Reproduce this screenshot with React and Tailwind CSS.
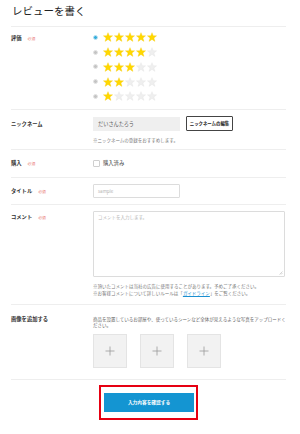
import React from "react";

const JP = "font-['Noto_Sans_CJK_JP','Noto_Sans',sans-serif]";

function Star({ on }) {
  return (
    <svg width="10" height="10" viewBox="0 0 24 24" className="block">
      <polygon
        points="12,1.5 15,9 23,9.2 16.7,14.2 19,22.5 12,17.8 5,22.5 7.3,14.2 1,9.2 9,9"
        fill={on ? "#ffd800" : "#efefef"}
        stroke={on ? "#f5c800" : "#e2e2e2"}
        strokeWidth="0.8"
      />
    </svg>
  );
}

function Required() {
  return <span className="ml-[6px] text-[3.8px] font-normal text-[#e8706b]">必須</span>;
}

function Label({ children, req, className = "" }) {
  return (
    <div className={`w-[82px] shrink-0 text-[5.3px] font-bold leading-[8px] text-[#333] ${className}`}>
      {children}
      {req && <Required />}
    </div>
  );
}

function Plus() {
  return (
    <svg width="10" height="10" viewBox="0 0 10 10">
      <line x1="5" y1="0.5" x2="5" y2="9.5" stroke="#9a9a9a" strokeWidth="0.8" />
      <line x1="0.5" y1="5" x2="9.5" y2="5" stroke="#9a9a9a" strokeWidth="0.8" />
    </svg>
  );
}

export default function App() {
  const ratings = [5, 4, 3, 2, 1];

  return (
    <div className={`w-[300px] h-[434px] bg-white ${JP}`}>
      <h1 className="h-[26px] pl-[12px] pt-[4px] text-[10.5px] leading-[14px] font-normal text-[#222]">
        レビューを書く
      </h1>

      <div className="mx-[11px] w-[275px]">
        {/* 評価 */}
        <div className="flex h-[83px] border-t border-[#eeeeee]">
          <Label req className="pt-[7px]">評価</Label>
          <div className="pt-[3px]">
            {ratings.map((r) => (
              <div key={r} className="flex h-[14.75px] items-center">
                {r === 5 ? (
                  <span className="h-[5px] w-[5px] rounded-full border border-[#bfe2f1] bg-[#35aedd]" />
                ) : (
                  <span className="h-[5px] w-[5px] rounded-full border border-[#e4e4e4] bg-[#c4c4c4]" />
                )}
                <div className="ml-[5px] flex gap-[1px]">
                  {[1, 2, 3, 4, 5].map((i) => (
                    <Star key={i} on={i <= r} />
                  ))}
                </div>
              </div>
            ))}
          </div>
        </div>

        {/* ニックネーム */}
        <div className="flex h-[40px] border-t border-[#eeeeee]">
          <Label className="pt-[10px]">ニックネーム</Label>
          <div className="pt-[6px]">
            <div className="flex items-center">
              <div className="flex h-[14px] w-[87px] items-center bg-[#efefef] pl-[5px] text-[5.2px] text-[#555]">
                だいさんたろう
              </div>
              <div className="ml-[6px] flex h-[15px] w-[47px] items-center justify-center rounded-[1px] border border-[#444] bg-white text-[4.4px] font-bold text-[#222]">
                ニックネームの編集
              </div>
            </div>
            <div className="mt-[6px] text-[4.5px] leading-[6px] text-[#777]">
              ※ニックネームの登録をおすすめします。
            </div>
          </div>
        </div>

        {/* 購入 */}
        <div className="flex h-[28px] items-center border-t border-[#eeeeee]">
          <Label req>購入</Label>
          <div className="flex items-center">
            <span className="h-[7px] w-[7px] rounded-[1px] border border-[#cfcfcf] bg-white" />
            <span className="ml-[3px] text-[5.3px] text-[#444]">購入済み</span>
          </div>
        </div>

        {/* タイトル */}
        <div className="flex h-[27px] items-center border-t border-[#eeeeee]">
          <Label req>タイトル</Label>
          <div className="flex h-[14px] w-[87px] items-center rounded-[1px] border border-[#dcdcdc] pl-[4px] text-[4.5px] text-[#b5b5b5]">
            sample
          </div>
        </div>

        {/* コメント */}
        <div className="flex h-[100px] border-t border-[#eeeeee]">
          <Label req className="pt-[8px]">コメント</Label>
          <div className="pt-[6px]">
            <div className="relative h-[66px] w-[192px] rounded-[1px] border border-[#dcdcdc] pl-[4px] pt-[2px] text-[4.5px] leading-[6px] text-[#b5b5b5]">
              コメントを入力します。
              <svg width="4" height="4" viewBox="0 0 4 4" className="absolute bottom-[1px] right-[1px]">
                <line x1="0.5" y1="3.5" x2="3.5" y2="0.5" stroke="#aaa" strokeWidth="0.5" />
                <line x1="2" y1="3.5" x2="3.5" y2="2" stroke="#aaa" strokeWidth="0.5" />
              </svg>
            </div>
            <div className="mt-[6px] text-[4.5px] leading-[7px] text-[#777]">
              <div>※頂いたコメントは当社の広告に使用することがあります。予めご了承ください。</div>
              <div>
                ※お客様コメントについて詳しいルールは「
                <span className="text-[#1a8fd0] underline">ガイドライン</span>
                」をご覧ください。
              </div>
            </div>
          </div>
        </div>

        {/* 画像を追加する */}
        <div className="flex h-[76px] border-y border-[#eeeeee]">
          <Label className="pt-[10px]">画像を追加する</Label>
          <div className="pt-[11px]">
            <p className="w-[193px] whitespace-nowrap text-[4.5px] leading-[6px] text-[#666]">
              商品を設置しているお部屋や、使っているシーンなど全体が見えるような写真をアップロードく
              <br />
              ださい。
            </p>
            <div className="mt-[6px] flex gap-[13px]">
              {[0, 1, 2].map((i) => (
                <div
                  key={i}
                  className="flex h-[34px] w-[34px] items-center justify-center border border-[#e4e4e4] bg-[#f2f2f2]"
                >
                  <Plus />
                </div>
              ))}
            </div>
          </div>
        </div>

        {/* 確認ボタン */}
        <div className="mt-[5px] flex justify-center">
          <div className="h-[35px] w-[99px] border-2 border-[#e60012] pl-[3px] pr-[2px] pt-[6px]">
            <div className="flex h-[19px] w-[90px] items-center justify-center bg-[#1495d2] text-[4.7px] font-bold text-white">
              入力内容を確認する
            </div>
          </div>
        </div>
      </div>
    </div>
  );
}
